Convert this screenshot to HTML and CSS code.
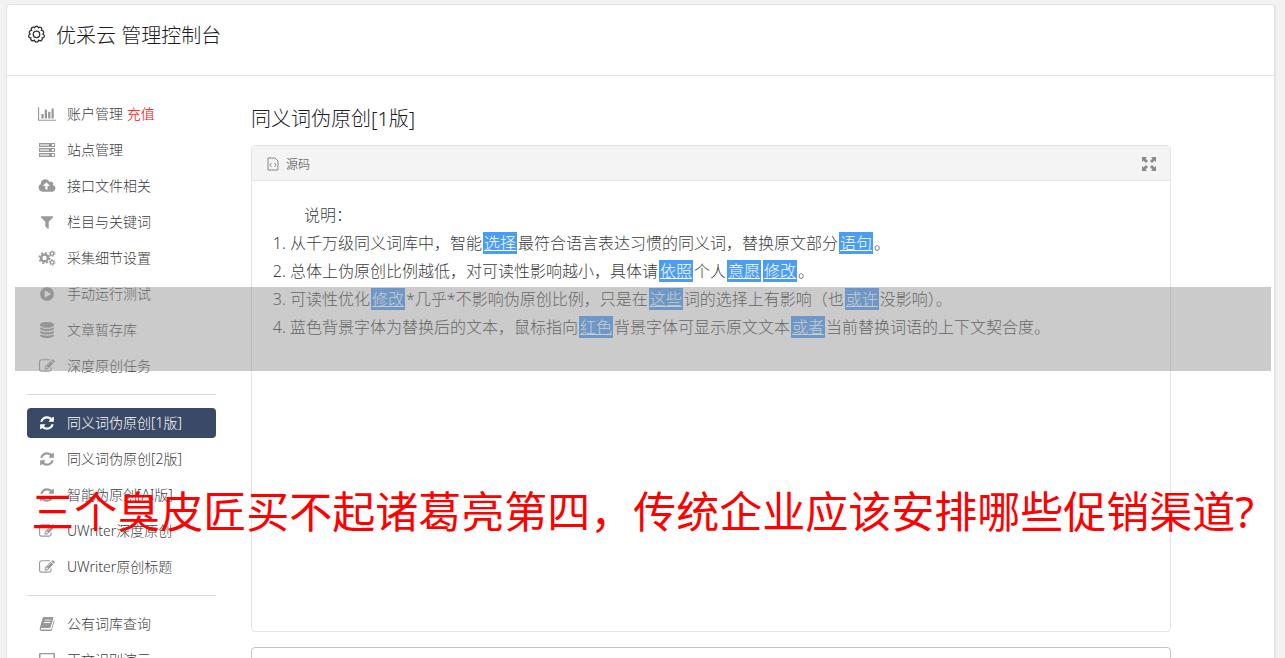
FILE: index.html
```
<!DOCTYPE html>
<html lang="zh-CN">
<head>
  <meta charset="UTF-8" />
  <title>优采云 管理控制台</title>
  <link rel="stylesheet" href="styles.css">
</head>
<body>
  <svg class="sprite" aria-hidden="true">
    <symbol id="i-chart" viewBox="0 0 2048 1792"><path d="M640 896v512h-256v-512h256zm384-512v1024h-256v-1024h256zm1024 1152v128h-2048v-1536h128v1408h1920zm-640-896v768h-256v-768h256zm384-384v1152h-256v-1152h256z"/></symbol>
    <symbol id="i-server" viewBox="0 0 18 16"><path opacity=".45" d="M2 2h9v2H2zM2 7h9v2H2zM2 12h9v2H2z"/><path fill-rule="evenodd" d="M1 1h16v4H1zM2 2v2h9V2zM1 6h16v4H1zM2 7v2h9V7zM1 11h16v4H1zM2 12v2h9v-2zM14 2v2h2V2zM14 7v2h2V7zM14 12v2h2v-2z"/></symbol>
    <symbol id="i-cloud" viewBox="0 0 2048 1792"><path d="M1344 864q0-14-9-23l-352-352q-9-9-23-9t-23 9l-351 351q-10 12-10 24 0 14 9 23t23 9h224v352q0 13 9.5 22.5t22.5 9.5h192q13 0 22.5-9.5t9.5-22.5v-352h224q13 0 22.5-9.5t9.5-22.5zm640 288q0 159-112.5 271.5t-271.5 112.5h-1088q-185 0-316.5-131.5t-131.5-316.5q0-130 70-240t188-165q-2-30-2-43 0-212 150-362t362-150q156 0 285.5 87t188.5 231q71-62 166-62 106 0 181 75t75 181q0 76-41 138 130 31 213.5 135.5t83.5 238.5z"/></symbol>
    <symbol id="i-filter" viewBox="0 0 1792 1792"><path d="M1595 295q17 41-14 70l-493 493v742q0 42-39 59-13 5-25 5-27 0-45-19l-256-256q-19-19-19-45v-486l-493-493q-31-29-14-70 17-39 59-39h1280q42 0 59 39z"/></symbol>
    <symbol id="i-cogs" viewBox="0 0 18 16">
      <g fill="none" stroke="currentColor">
        <circle cx="6.5" cy="8" r="3.4" stroke-width="2.4"/>
        <circle cx="6.5" cy="8" r="5.2" stroke-width="1.6" stroke-dasharray="2.04 2.04"/>
        <circle cx="14.2" cy="3.6" r="1.8" stroke-width="1.3"/>
        <circle cx="14.2" cy="3.6" r="2.8" stroke-width="1" stroke-dasharray="1.47 1.47"/>
        <circle cx="14.2" cy="12.4" r="1.8" stroke-width="1.3"/>
        <circle cx="14.2" cy="12.4" r="2.8" stroke-width="1" stroke-dasharray="1.47 1.47"/>
      </g>
    </symbol>
    <symbol id="i-play" viewBox="0 0 1792 1792"><path d="M896 128q209 0 385.5 103t279.5 279.5 103 385.5-103 385.5-279.5 279.5-385.5 103-385.5-103-279.5-279.5-103-385.5 103-385.5 279.5-279.5 385.5-103zm384 823q32-18 32-55t-32-55l-544-320q-31-19-64-1-32 19-32 56v640q0 37 32 56 16 8 32 8 17 0 32-9z" fill-rule="evenodd"/></symbol>
    <symbol id="i-database" viewBox="0 0 1792 1792"><path d="M896 768q237 0 443-43t325-127v170q0 69-103 128t-280 93.5-385 34.5-385-34.5-280-93.5-103-128v-170q119 84 325 127t443 43zm0 768q237 0 443-43t325-127v170q0 69-103 128t-280 93.5-385 34.5-385-34.5-280-93.5-103-128v-170q119 84 325 127t443 43zm0-384q237 0 443-43t325-127v170q0 69-103 128t-280 93.5-385 34.5-385-34.5-280-93.5-103-128v-170q119 84 325 127t443 43zm0-1152q208 0 385 34.5t280 93.5 103 128v128q0 69-103 128t-280 93.5-385 34.5-385-34.5-280-93.5-103-128v-128q0-69 103-128t280-93.5 385-34.5z"/></symbol>
    <symbol id="i-edit" viewBox="0 0 1792 1792"><path d="M888 1184l116-116-152-152-116 116v56h96v96h56zm440-720q-16-16-33 1l-350 350q-17 17-1 33t33-1l350-350q17-17 1-33zm80 594v190q0 119-84.5 203.5t-203.5 84.5h-832q-119 0-203.5-84.5t-84.5-203.5v-832q0-119 84.5-203.5t203.5-84.5h832q63 0 117 25 15 7 18 23 3 17-9 29l-49 49q-14 14-32 8-23-6-45-6h-832q-66 0-113 47t-47 113v832q0 66 47 113t113 47h832q66 0 113-47t47-113v-126q0-13 9-22l64-64q15-15 35-7t20 29zm-96-738l288 288-672 672h-288v-288zm444 132l-92 92-288-288 92-92q28-28 68-28t68 28l152 152q28 28 28 68t-28 68z"/></symbol>
    <symbol id="i-refresh" viewBox="0 0 1792 1792"><path d="M1639 1056q0 5-1 7-64 268-268 434.5t-478 166.5q-146 0-282.5-55t-243.5-157l-129 129q-19 19-45 19t-45-19-19-45v-448q0-26 19-45t45-19h448q26 0 45 19t19 45-19 45l-137 137q71 66 161 102t187 36q134 0 250-65t186-179q11-17 53-117 8-23 30-23h192q13 0 22.5 9.5t9.5 22.5zm25-800v448q0 26-19 45t-45 19h-448q-26 0-45-19t-19-45 19-45l138-138q-148-137-349-137-134 0-250 65t-186 179q-11 17-53 117-8 23-30 23h-199q-13 0-22.5-9.5t-9.5-22.5v-7q65-268 270-434.5t480-166.5q146 0 284 55.5t245 156.5l130-129q19-19 45-19t45 19 19 45z"/></symbol>
    <symbol id="i-book" viewBox="0 0 18 16"><path fill-rule="evenodd" d="M6 1h8.500q1.300 0 .9 1.300L12.700 11q-.3 1-1.400 1H3.600q-1 0-.7.900.2.600 1 .6h8.400q.8 0 1.100-.8L16 4q.7.600.4 1.500l-2.500 8.200q-.4 1.300-1.700 1.300H3.900q-1.600 0-2.200-1.500-.2-.6 0-1.200L4.500 2.200Q4.900 1 6 1zM7 3.700l-.3.900h6l.3-.9zM6.300 6l-.3.900h6l.3-.9z"/></symbol>
    <symbol id="i-desktop" viewBox="0 0 18 16"><path fill-rule="evenodd" d="M2 1h14q1 0 1 1v9q0 1-1 1h-5l1 3H6l1-3H2q-1 0-1-1V2q0-1 1-1zM2.500 2.300v7.200h13V2.300z"/></symbol>
  </svg>

  <div class="page">
    <header class="page-header">
      <svg class="gear" viewBox="0 0 20 20" aria-hidden="true">
        <path d="M8 2.800Q8.500 1.300 10 1.300t2 1.500q1.800-1.200 3 0t.3 2.800q1.800.1 2.200 1.500t-.8 2.400Q18.500 10.500 18.300 12t-2.300 1.500q.5 1.800-.8 2.700t-2.900-.1q-.6 1.900-2.300 1.900t-2.300-1.900q-1.600 1-2.900.1T4 13.500Q1.900 13.500 1.700 12t1.600-2.500Q2.100 8.500 2.500 7.100t2.200-1.500Q3.800 4 5 2.800t3 0z"/>
        <circle cx="10" cy="9.800" r="3.400"/>
      </svg>
      <h1>优采云 管理控制台</h1>
    </header>

    <div class="page-body">
      <nav class="sidebar">
        <ul>
          <li><a href="#"><svg><use href="#i-chart"/></svg><span>账户管理 <em>充值</em></span></a></li>
          <li><a href="#"><svg><use href="#i-server"/></svg>站点管理</a></li>
          <li><a href="#"><svg><use href="#i-cloud"/></svg>接口文件相关</a></li>
          <li><a href="#"><svg><use href="#i-filter"/></svg>栏目与关键词</a></li>
          <li><a href="#"><svg><use href="#i-cogs"/></svg>采集细节设置</a></li>
          <li><a href="#"><svg><use href="#i-play"/></svg>手动运行测试</a></li>
          <li><a href="#"><svg><use href="#i-database"/></svg>文章暂存库</a></li>
          <li><a href="#"><svg><use href="#i-edit"/></svg>深度原创任务</a></li>
        </ul>
        <hr>
        <ul>
          <li><a href="#" class="active"><svg><use href="#i-refresh"/></svg>同义词伪原创[1版]</a></li>
          <li><a href="#"><svg><use href="#i-refresh"/></svg>同义词伪原创[2版]</a></li>
          <li><a href="#"><svg><use href="#i-refresh"/></svg>智能伪原创[AI版]</a></li>
          <li><a href="#"><svg><use href="#i-edit"/></svg>UWriter深度原创</a></li>
          <li><a href="#"><svg><use href="#i-edit"/></svg>UWriter原创标题</a></li>
        </ul>
        <hr>
        <ul>
          <li><a href="#"><svg><use href="#i-book"/></svg>公有词库查询</a></li>
          <li><a href="#"><svg><use href="#i-desktop"/></svg>正文识别演示</a></li>
        </ul>
      </nav>

      <main>
        <h2>同义词伪原创[1版]</h2>
        <div class="editor">
          <div class="toolbar">
            <button type="button">
              <svg class="source" viewBox="0 0 12 14" aria-hidden="true"><path d="M1 1h7l3 3v9H1zM4.500 6L2.800 8l1.700 2M7.500 6l1.700 2-1.700 2"/></svg>
              源码
            </button>
            <button type="button" aria-label="全屏">
              <svg class="expand" viewBox="0 0 14 14" aria-hidden="true"><path d="M0 0h5L3.500 1.500 6 4 4 6 1.500 3.500 0 5zM14 0v5l-1.500-1.500L10 6 8 4l2.500-2.500L9 0zM0 14V9l1.500 1.500L4 8l2 2-2.500 2.500L5 14zM14 14H9l1.500-1.500L8 10l2-2 2.500 2.500L14 9z"/></svg>
            </button>
          </div>
          <div class="content">
            <p>说明：</p>
            <ol>
              <li>从千万级同义词库中，智能<a href="#">选择</a>最符合语言表达习惯的同义词，替换原文部分<a href="#">语句</a>。</li>
              <li>总体上伪原创比例越低，对可读性影响越小，具体请<a href="#">依照</a>个人<a href="#">意愿</a><a href="#">修改</a>。</li>
              <li>可读性优化<a href="#">修改</a>*几乎*不影响伪原创比例，只是在<a href="#">这些</a>词的选择上有影响（也<a href="#">或许</a>没影响）。</li>
              <li>蓝色背景字体为替换后的文本，鼠标指向<a href="#">红色</a>背景字体可显示原文文本<a href="#">或者</a>当前替换词语的上下文契合度。</li>
            </ol>
          </div>
        </div>
        <textarea aria-label="原文"></textarea>
      </main>
    </div>
  </div>

  <div class="band"></div>
  <div class="caption">三个臭皮匠买不起诸葛亮第四，传统企业应该安排哪些促销渠道?</div>
</body>
</html>
```
FILE: styles.css
```
:root {
  --text: #3c3c3c;
  --dark: #1c1c1c;
  --icon: #999;
  --line: #e4e4e4;
  --active: #3a4a66;
  --mark: #4a9cf5;
}

* {
  box-sizing: border-box;
}

body {
  position: relative;
  margin: 0;
  height: 100vh;
  overflow: hidden;
  background: #f2f2f2;
  color: var(--text);
  font-family: "Noto Sans", "Noto Sans CJK SC", sans-serif;
  font-weight: 300;
  font-size: 14px;
}

.sprite {
  display: none;
}

h1, h2 {
  margin: 0;
  font-size: 20px;
  line-height: 30px;
  font-weight: 300;
  color: var(--dark);
}

a {
  color: inherit;
  text-decoration: none;
}

.page {
  margin: 4px 9px 0 6px;
  background: white;
  border: 1px solid var(--line);
  border-right-width: 2px;
  border-radius: 4px;
}

.page-header {
  display: flex;
  align-items: flex-start;
  gap: 10px;
  padding: 16px 20px 24px;
  border-bottom: 1px solid var(--line);
}

.gear {
  width: 19px;
  height: 19px;
  margin-top: 4px;
  fill: none;
  stroke: #333;
  stroke-width: 1.4;
}

.page-body {
  display: flex;
  gap: 35px;
  padding: 23px 20px;
}

/* sidebar */
.sidebar {
  flex: 0 0 189px;
}

.sidebar ul {
  display: grid;
  gap: 6px;
  margin: 0;
  padding: 0;
  list-style: none;
}

.sidebar a {
  display: flex;
  align-items: center;
  gap: 11px;
  height: 30px;
  padding: 0 11px;
  border-radius: 4px;
  line-height: 28px;
  padding-bottom: 1px;
  white-space: nowrap;
}

.sidebar svg {
  width: 18px;
  height: 16px;
  color: var(--icon);
  fill: currentColor;
}

.sidebar em {
  color: red;
  font-style: normal;
}

.sidebar hr {
  margin: 13px 0;
  border: 0;
  border-top: 1px solid #d9d9d9;
}

.sidebar .active,
.sidebar .active svg {
  color: white;
}

.sidebar .active {
  background: var(--active);
}

/* editor */
main {
  flex: 0 1 920px;
  padding-top: 5px;
}

.editor {
  margin: 11px 0 15px;
  border: 1px solid var(--line);
  border-radius: 4px;
}

.toolbar {
  display: flex;
  justify-content: space-between;
  align-items: center;
  height: 35px;
  padding: 2px 14px 0;
  background: #f4f4f4;
  border-bottom: 1px solid var(--line);
}

.toolbar button {
  display: flex;
  align-items: center;
  gap: 6px;
  padding: 0;
  border: 0;
  background: none;
  color: var(--text);
  font: inherit;
  font-size: 12px;
}

.source {
  width: 14px;
  height: 14px;
  fill: none;
  stroke: #888;
}

.expand {
  width: 14px;
  height: 14px;
  fill: #8a8a8a;
}

.content {
  min-height: 450px;
  padding: 20px;
  font-size: 16px;
  line-height: 28px;
}

.content p {
  margin: 0;
  text-indent: 2em;
}

.content ol {
  margin: 0;
  padding-left: 18px;
}

.content a {
  margin: 0 1px;
  padding: 0 1px;
  background: var(--mark);
  color: white;
  text-decoration: underline;
}

textarea {
  display: block;
  width: 100%;
  height: 120px;
  border: 1px solid #c4c4c4;
  border-radius: 4px;
  resize: none;
}

/* banner over the page */
.band {
  position: absolute;
  top: 287px;
  left: 15px;
  right: 14px;
  height: 84px;
  background: rgba(146, 146, 146, 0.48);
}

.caption {
  position: absolute;
  top: 482px;
  left: 0;
  right: 0;
  text-align: center;
  white-space: nowrap;
  color: red;
  font-size: 43px;
  line-height: 60px;
  font-weight: 400;
}
```
